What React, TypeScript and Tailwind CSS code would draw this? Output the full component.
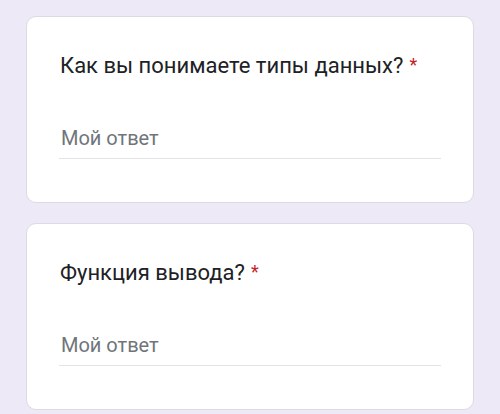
export default function App() {
  const items = ["Как вы понимаете типы данных?", "Функция вывода?"];
  return (
    <div className="w-[500px] h-[414px] bg-[#ede9f6] pt-[16px] px-[26px] flex flex-col gap-[20px] overflow-hidden" style={{ fontFamily: "Roboto, 'Noto Sans', sans-serif" }}>
      {items.map((t) => (
        <div key={t} className="h-[187px] bg-white border border-[#dcdae3] rounded-[10px] pt-[34px] pl-[33px] pr-[33px] shrink-0">
          <div className="text-[22px] leading-[30px] text-[#202124] flex items-start">
            <span>{t}</span>
            <span className="text-[#c5221f] text-[18px] ml-[6px] mt-[2px] leading-[24px]">*</span>
          </div>
          <div className="mt-[45px] text-[20px] leading-[24px] text-[#70757a] pl-[1px]">Мой ответ</div>
          <div className="mt-[8px] h-px bg-[#e3e3e6] w-[382px] -ml-[1px]" />
        </div>
      ))}
    </div>
  );
}
